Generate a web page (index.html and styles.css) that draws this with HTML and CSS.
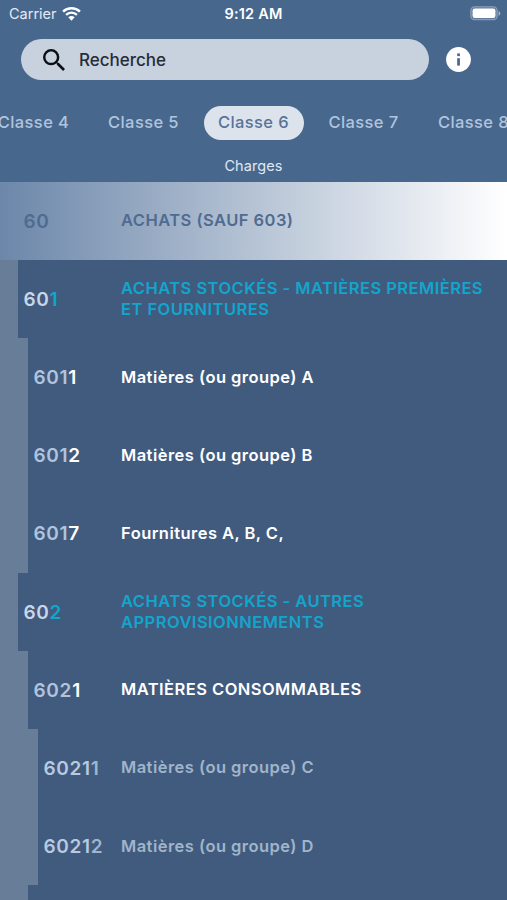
FILE: index.html
```
<!DOCTYPE html>
<html lang="fr">
<head>
    <meta charset="UTF-8">
    <meta name="viewport" content="width=device-width, initial-scale=1.0">
    <title>Plan comptable</title>
    <link rel="stylesheet" href="styles.css">
</head>
<body>
    <header>
        <div class="status-bar">
            <div class="carrier">
                <span>Carrier</span>
                <svg class="wifi" viewBox="0 0 18 14" width="19" height="15">
                    <path d="M1 5.2a11.5 11.5 0 0 1 16 0" fill="none" stroke="#fff" stroke-width="2.3"/>
                    <path d="M3.9 8.3a7.2 7.2 0 0 1 10.2 0" fill="none" stroke="#fff" stroke-width="2.2"/>
                    <path d="M6 10.6a4.3 4.3 0 0 1 6 0L9 13.8z" fill="#fff"/>
                </svg>
            </div>
            <div class="clock">9:12 AM</div>
            <svg class="battery" viewBox="0 0 31 15" width="31" height="15">
                <rect x="0.8" y="0.8" width="26.4" height="13" rx="3.8" fill="#fff" fill-opacity="0.15" stroke="#fff" stroke-opacity="0.35" stroke-width="1.1"/>
                <rect x="2.6" y="2.6" width="22.8" height="9.4" rx="2.2" fill="#fff"/>
                <path d="M28.6 5v4.8c1-.4 1.7-1.3 1.7-2.4s-.7-2-1.7-2.4z" fill="#fff" fill-opacity="0.5"/>
            </svg>
        </div>

        <div class="search-row">
            <div class="search">
                <svg viewBox="3 3 17.5 17.5" width="22" height="22">
                    <path d="M15.5 14h-.79l-.28-.27A6.471 6.471 0 0 0 16 9.5 6.5 6.5 0 1 0 9.5 16c1.61 0 3.09-.59 4.23-1.57l.27.28v.79l5 4.99L20.49 19l-4.99-5zm-6 0C7.01 14 5 11.99 5 9.5S7.01 5 9.5 5 14 7.01 14 9.5 11.99 14 9.5 14z" fill="#0b0f14"/>
                </svg>
                <span>Recherche</span>
            </div>
            <svg class="info" viewBox="0 0 25 25" width="25" height="25">
                <circle cx="12.5" cy="12.5" r="12.4" fill="#fff"/>
                <rect x="11.2" y="6.4" width="2.7" height="2.7" fill="#48678d"/>
                <rect x="11.2" y="11.2" width="2.7" height="7.4" fill="#48678d"/>
            </svg>
        </div>

        <nav class="tabs">
            <span class="tab">Classe 4</span>
            <span class="tab">Classe 5</span>
            <span class="tab active">Classe 6</span>
            <span class="tab">Classe 7</span>
            <span class="tab">Classe 8</span>
        </nav>
        <div class="subtitle">Charges</div>
    </header>

    <main>
        <div class="row level-2">
            <div class="code">60</div>
            <div class="label">ACHATS (SAUF 603)</div>
        </div>
        <div class="row level-3">
            <div class="code">60<b>1</b></div>
            <div class="label">ACHATS STOCKÉS - MATIÈRES PREMIÈRES ET FOURNITURES</div>
        </div>
        <div class="row level-4">
            <div class="code">601<b>1</b></div>
            <div class="label">Matières (ou groupe) A</div>
        </div>
        <div class="row level-4">
            <div class="code">601<b>2</b></div>
            <div class="label">Matières (ou groupe) B</div>
        </div>
        <div class="row level-4">
            <div class="code">601<b>7</b></div>
            <div class="label">Fournitures A, B, C,</div>
        </div>
        <div class="row level-3">
            <div class="code">60<b>2</b></div>
            <div class="label">ACHATS STOCKÉS - AUTRES APPROVISIONNEMENTS</div>
        </div>
        <div class="row level-4">
            <div class="code">602<b>1</b></div>
            <div class="label">MATIÈRES CONSOMMABLES</div>
        </div>
        <div class="row level-5">
            <div class="code">6021<b>1</b></div>
            <div class="label">Matières (ou groupe) C</div>
        </div>
        <div class="row level-5">
            <div class="code">6021<b>2</b></div>
            <div class="label">Matières (ou groupe) D</div>
        </div>
        <div class="row level-4 last"></div>
    </main>
</body>
</html>
```
FILE: styles.css
```
* {
    box-sizing: border-box;
}

body {
    margin: 0;
    height: 900px;
    overflow: hidden;
    background: #415b7f;
    font-family: Inter, "Liberation Sans", sans-serif;
    color: #fff;
}

/* Header */
header {
    height: 181.7px;
    background: #48678d;
    overflow: hidden;
}

.status-bar {
    display: grid;
    grid-template-columns: 1fr auto 1fr;
    align-items: center;
    height: 27px;
    padding: 0 6px 0 9px;
    font-size: 14.5px;
    line-height: 18px;
}

.carrier {
    display: flex;
    align-items: center;
    gap: 5px;
    color: #e4ebf5;
}

.clock {
    margin-right: 3px;
    font-weight: 600;
    font-size: 14.5px;
    letter-spacing: 0.2px;
}

.battery {
    justify-self: end;
}

.search-row {
    display: flex;
    align-items: center;
    gap: 17px;
    margin-top: 12px;
    padding-left: 20.5px;
}

.search {
    display: flex;
    align-items: center;
    gap: 14px;
    width: 408px;
    height: 41px;
    padding-left: 22.5px;
    border-radius: 21px;
    background: #c8d1de;
    color: #252d39;
    font-size: 17px;
    font-weight: 500;
}

.tabs {
    display: flex;
    justify-content: center;
    gap: 10px;
    margin-top: 26px;
}

.tab {
    flex: none;
    width: 100px;
    height: 34px;
    border-radius: 17px;
    line-height: 32px;
    text-align: center;
    white-space: nowrap;
    font-size: 16.5px;
    font-weight: 500;
    letter-spacing: 0.4px;
    color: #b0c4de;
}

.tab.active {
    background: #dde3ec;
    color: #58739a;
}

.subtitle {
    margin-top: 16px;
    text-align: center;
    font-size: 14.5px;
    line-height: 20px;
    letter-spacing: 0.1px;
    color: #dfe7f3;
}

/* Account list */
.row {
    display: flex;
    align-items: center;
    height: 78.18px;
    border-left: 0 solid #687e98;
}

.code {
    flex: none;
    padding-top: 1px;
    padding-left: 5.5px;
    font-size: 19px;
    font-weight: 600;
    letter-spacing: 0.7px;
    color: #b0c4de;
}

.code b {
    font-weight: 600;
    color: #fff;
}

.label {
    flex: 1;
    padding-right: 20px;
    font-size: 16.5px;
    font-weight: 600;
    line-height: 21px;
    letter-spacing: 0.46px;
}

.level-2 {
    background: linear-gradient(to right, #6c87aa, #fff);
    color: #506b90;
}

.level-2 .code {
    width: 121px;
    padding-left: 23.5px;
    color: #506b90;
}

.level-3 {
    border-left-width: 18px;
}

.level-3 .code {
    width: 103px;
    color: #c9d6e8;
}

.level-3 .label,
.level-3 .code b {
    color: #13a5cc;
}

.level-4 {
    border-left-width: 28px;
}

.level-4 .code {
    width: 93px;
}

.level-5 {
    border-left-width: 38px;
}

.level-5 .code {
    width: 83px;
    color: #b8cae1;
}

.level-5 .label,
.level-5 .code b {
    color: #a0b5ca;
}

/* Only the top of the next row is visible */
.last {
    height: 14.6px;
}
```
